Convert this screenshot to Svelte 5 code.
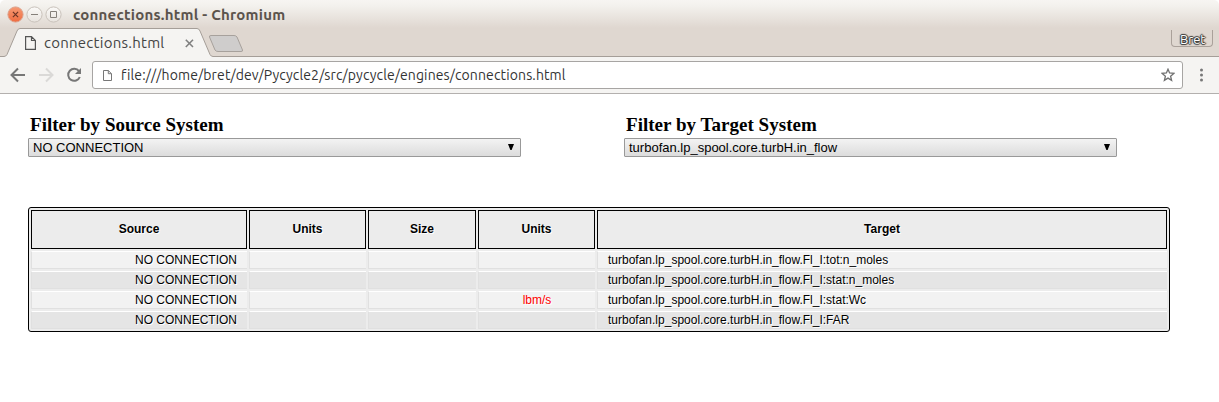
<script>
  const filters = [
    { title: 'Filter by Source System', value: 'NO CONNECTION' },
    { title: 'Filter by Target System', value: 'turbofan.lp_spool.core.turbH.in_flow' }
  ];
  const headers = ['Source', 'Units', 'Size', 'Units', 'Target'];
  const rows = [
    ['NO CONNECTION', '', '', '', 'turbofan.lp_spool.core.turbH.in_flow.Fl_I:tot:n_moles'],
    ['NO CONNECTION', '', '', '', 'turbofan.lp_spool.core.turbH.in_flow.Fl_I:stat:n_moles'],
    ['NO CONNECTION', '', '', 'lbm/s', 'turbofan.lp_spool.core.turbH.in_flow.Fl_I:stat:Wc'],
    ['NO CONNECTION', '', '', '', 'turbofan.lp_spool.core.turbH.in_flow.Fl_I:FAR']
  ];
</script>

<div class="window">
  <header class="frame">
    <div class="titlebar">
      <svg class="controls" width="58" height="20" viewBox="0 0 58 20">
        <defs>
          <linearGradient id="close" x1="0" y1="0" x2="0" y2="1"><stop offset="0" stop-color="#f69a74" /><stop offset="1" stop-color="#ef6c40" /></linearGradient>
          <linearGradient id="plain" x1="0" y1="0" x2="0" y2="1"><stop offset="0" stop-color="#fbfaf8" /><stop offset="1" stop-color="#e8e3de" /></linearGradient>
        </defs>
        <g stroke="#c9c2bb">
          <circle cx="10.5" cy="10.5" r="7.6" fill="url(#close)" stroke="#dda18b" />
          <circle cx="29.5" cy="10.5" r="7.6" fill="url(#plain)" />
          <circle cx="48.5" cy="10.5" r="7.6" fill="url(#plain)" />
        </g>
        <path d="M7.9 7.9l5.2 5.2M13.1 7.9l-5.2 5.2" stroke="#6b3425" stroke-width="1.2" />
        <path d="M26 10.5h7M45.5 7.5h6v6h-6z" fill="none" stroke="#85807a" />
      </svg>
      <span class="title">connections.html - Chromium</span>
    </div>
    <div class="tabstrip">
      <svg class="tabshape" width="1219" height="29" viewBox="0 0 1219 29">
        <path d="M0 28.5H4Q6 28.5 7 26.5L17 3Q18 .5 20 .5H197Q199 .5 200 3L210 26.5Q211 28.5 213 28.5H1219V29H0z" fill="#f5f4f2" />
        <path d="M0 28.5H4Q6 28.5 7 26.5L17 3Q18 .5 20 .5H197Q199 .5 200 3L210 26.5Q211 28.5 213 28.5H1219" fill="none" stroke="#a59e98" />
        <path d="M211 7.5H234Q236 7.5 237 9L242.5 22Q243 23.5 241 23.5H218Q216 23.5 215 22L209.5 9Q209 7.5 211 7.5z" fill="#cfcdcc" stroke="#a7a19c" />
      </svg>
      <div class="tab">
        <svg width="11" height="14" viewBox="0 0 11 14"><path d="M.6.6H6.5L10.4 4.5V13.4H.6zM6.5.6V4.5H10.4" fill="none" stroke="#555" stroke-width="1.2" /></svg>
        <span class="tabtitle">connections.html</span>
        <svg class="x" width="9" height="9" viewBox="0 0 9 9"><path d="M.8.8l7.2 7.2M8 .8L.8 8" stroke="#808080" stroke-width="1.6" /></svg>
      </div>
      <div class="user">Bret</div>
    </div>
  </header>

  <nav class="toolbar">
    <svg class="nav" width="92" height="36" viewBox="0 0 92 36">
      <path d="M25 18H12M18 11.5L11.5 18L18 24.5" fill="none" stroke="#777" stroke-width="2" />
      <path d="M39 18H52M46 11.5L52.5 18L46 24.5" fill="none" stroke="#dad9d7" stroke-width="2" />
      <path d="M79 14.2A6 6 0 1 0 79.8 20" fill="none" stroke="#777" stroke-width="2" />
      <path d="M81 11V17H75z" fill="#777" />
    </svg>
    <div class="address">
      <svg width="9" height="11" viewBox="0 0 9 11"><path d="M.5.5H5.3L8.5 3.7V10.5H.5zM5.3.5V3.7H8.5" fill="none" stroke="#777" /></svg>
      <span class="url">file:///home/bret/dev/Pycycle2/src/pycycle/engines/connections.html</span>
      <svg class="star" width="14" height="14" viewBox="0 0 14 14"><path d="M7 1.2L8.6 5L12.8 5.4L9.6 8.2L10.6 12.3L7 10.1L3.4 12.3L4.4 8.2L1.2 5.4L5.4 5z" fill="none" stroke="#707070" stroke-width="1.3" /></svg>
    </div>
    <svg class="menu" width="4" height="14" viewBox="0 0 4 14" fill="#777"><circle cx="1.5" cy="2" r="1.5" /><circle cx="1.5" cy="7" r="1.5" /><circle cx="1.5" cy="12" r="1.5" /></svg>
  </nav>

  <main>
    <div class="filters">
      {#each filters as filter}
        <section>
          <h3>{filter.title}</h3>
          <div class="select">
            <span>{filter.value}</span>
            <svg width="6" height="6" viewBox="0 0 6 6"><path d="M0 0H6L3.6 6H2.4z" fill="#000" /></svg>
          </div>
        </section>
      {/each}
    </div>

    <div class="table" role="table">
      {#each headers as header}
        <div class="th" role="columnheader">{header}</div>
      {/each}
      {#each rows as row, r}
        {#each row as cell, c}
          <div class="td" role="cell" class:even={r % 2 === 1} class:source={c === 0} class:target={c === 4} class:mismatch={c === 3}>{cell}</div>
        {/each}
      {/each}
    </div>
  </main>
</div>

<style>
  :global(body) { margin: 0; background: #fff; }
  .window { width: 1219px; height: 402px; overflow: hidden; background: #fff; color: #000; }
  svg { display: block; flex: none; }
  .frame {
    height: 57px;
    background: linear-gradient(#f7f5f2 0, #f3f1ed 6px, #dfd7d0 28px, #dfd7d0);
    border-radius: 5px 5px 0 0;
    font-family: Ubuntu, "Noto Sans", sans-serif;
  }
  .titlebar { display: flex; height: 28px; box-sizing: border-box; padding: 4px 0 0 5px; }
  .title { margin-left: 10px; font-size: 15px; font-weight: 700; line-height: 21px; letter-spacing: 0.24px; color: #5b534c; white-space: nowrap; }
  .tabstrip { position: relative; display: flex; height: 29px; justify-content: space-between; }
  .tabshape { position: absolute; left: 0; top: 0; }
  .tab { position: relative; display: flex; width: 170px; height: 29px; align-items: center; padding-left: 25px; }
  .tabtitle { margin-left: 8px; width: 140px; font-size: 15px; line-height: 29px; letter-spacing: 0.25px; color: #444; white-space: nowrap; }
  .x { margin: 1px 0 0 1px; }
  .user {
    position: relative; width: 42px; height: 17px; box-sizing: border-box; margin: 2px 6px 0 0;
    border: 1px solid #aaa19a; border-top: 0; border-radius: 0 0 4px 4px;
    padding-left: 8px; font-size: 13px; line-height: 19px; color: #fff;
    text-shadow: 0 0 1px #333, 1px 0 1px #333, -1px 0 1px #333, 0 1px 1px #333, 0 -1px 1px #333;
  }
  .toolbar { display: flex; height: 37px; box-sizing: border-box; background: #f5f4f2; border-bottom: 1px solid #b3b0ae; }
  .address {
    display: flex; width: 1091px; height: 28px; box-sizing: border-box; margin-top: 4px; align-items: center;
    background: #fff; border: 1px solid #a7a5a3; border-radius: 3px; padding: 0 7px 0 10px;
  }
  .url { margin-left: 9px; flex: 1; font: 14px/26px Ubuntu, "Noto Sans", sans-serif; letter-spacing: 0.12px; color: #333; white-space: nowrap; }
  .menu { margin: 11px 0 0 17px; }
  main { padding: 19px 0 0 28px; }
  .filters { display: grid; grid-template-columns: 493px 493px; column-gap: 103px; }
  h3 { margin: 0; padding-left: 2px; height: 25px; font: 700 19px/24px "Liberation Serif", serif; letter-spacing: 0.03px; white-space: nowrap; }
  .select {
    display: flex; height: 19px; box-sizing: border-box; align-items: center; justify-content: space-between;
    border: 1px solid #999; border-radius: 1px; padding: 0 6px 0 4px;
    background: linear-gradient(#f3f3f3, #dcdcdc); font: 13px/17px "Liberation Sans", Arial, sans-serif;
  }
  .select svg { margin-top: -1px; }
  .table {
    display: grid; width: 1142px; height: 125px; box-sizing: border-box; margin-top: 50px;
    grid-template-columns: 216px 117px 108px 117px 570px; grid-template-rows: 39px repeat(4, 18px); gap: 2px;
    border: 1px solid #000; border-radius: 3px; padding: 2px;
    background: #ececec; font: 12px/16px "Liberation Sans", Arial, sans-serif; text-shadow: 1px 1px 0 #fff;
  }
  .th { border: 1px solid #000; font-weight: 700; line-height: 37px; text-align: center; background: #ececec; }
  .td {
    border-top: 1px solid #fff; border-bottom: 1px solid #e0e0e0; border-left: 1px solid #e0e0e0;
    background: #f2f2f2; text-align: center; white-space: nowrap;
  }
  .even { background: #e5e5e5; }
  .source { text-align: right; padding-right: 10px; }
  .target { text-align: left; padding-left: 10px; }
  .mismatch { color: #f00; }
</style>
